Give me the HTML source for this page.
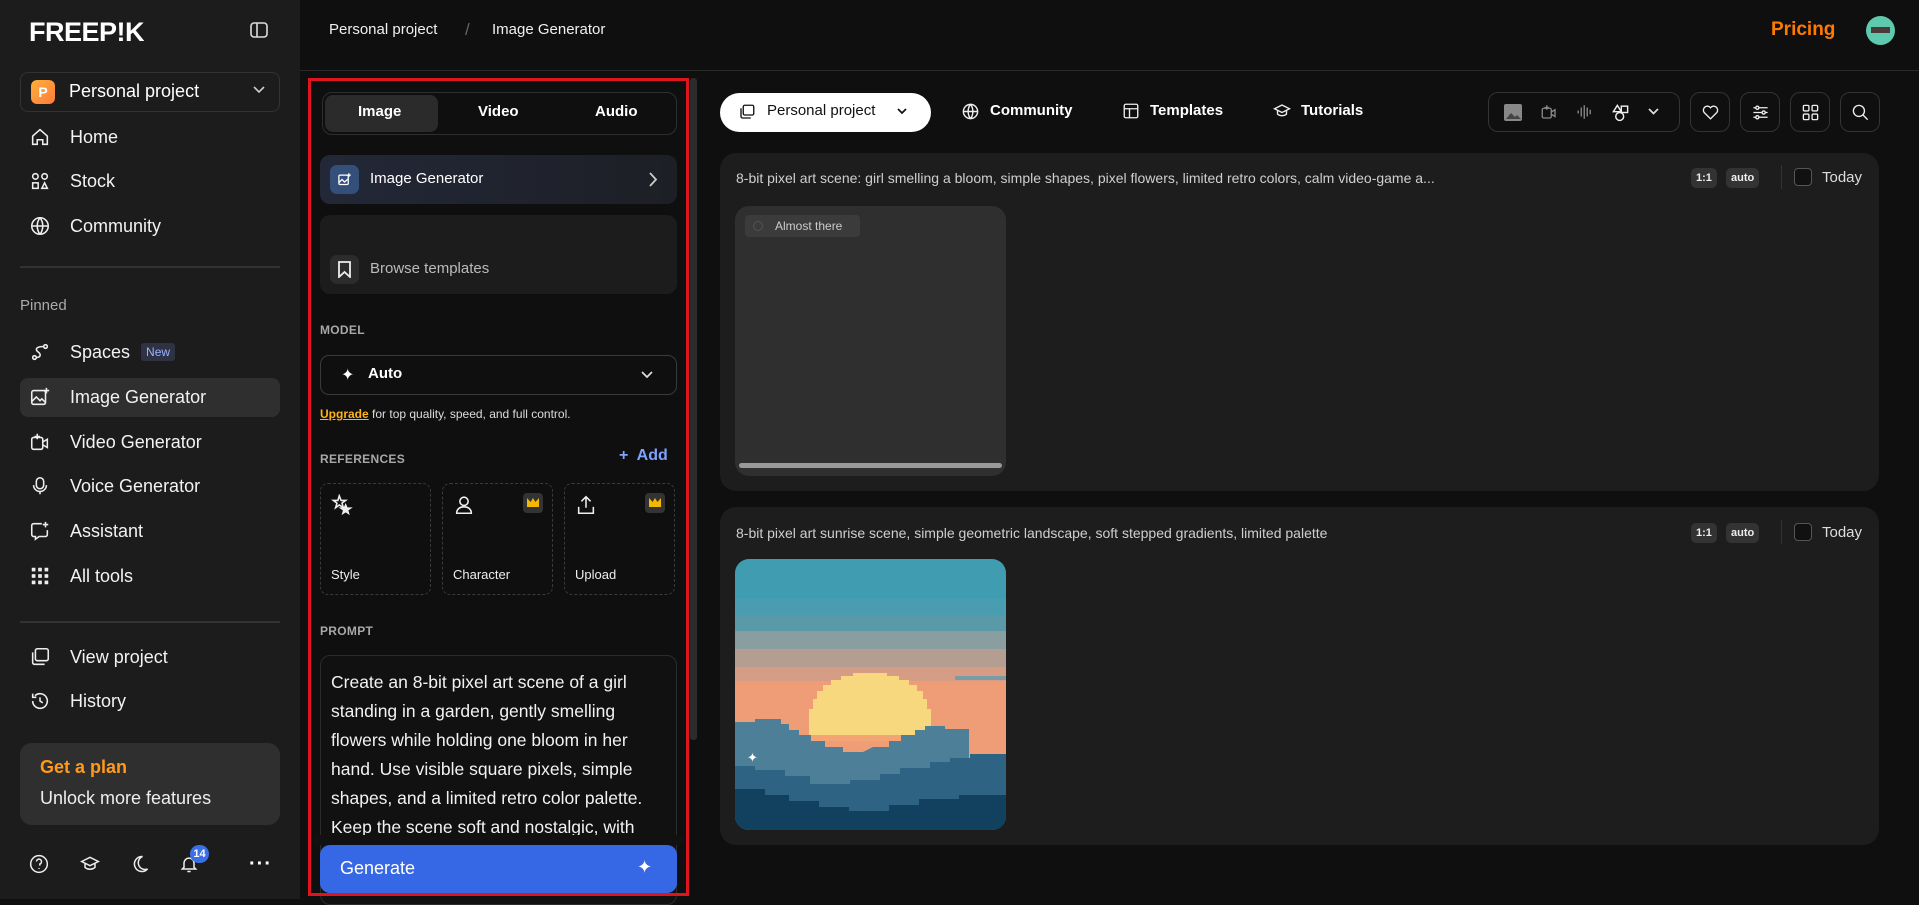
<!DOCTYPE html>
<html><head><meta charset="utf-8"><style>
*{box-sizing:border-box;margin:0;padding:0}
body{width:1919px;height:899px;background:#0f0f0f;font-family:"Liberation Sans",sans-serif;color:#fff;position:relative;overflow:hidden}
.a{position:absolute}
.sb{left:0;top:0;width:300px;height:899px;background:#1c1c1c}
.nav{left:29px;font-size:18px;color:#f2f2f2;display:flex;align-items:center;gap:19px;height:30px}
.nav svg{width:22px;height:22px;stroke:#eee;fill:none;stroke-width:1.7}
.lbl{font-size:12px;color:#a8a8a8;font-weight:bold;letter-spacing:.3px}
.ref{border:1.5px dashed #3a3a3a;border-radius:8px;width:111px;height:112px}
.ref span{position:absolute;left:10px;bottom:12px;font-size:13px;color:#eee}
.ref svg{position:absolute;left:10px;top:10px;width:22px;height:22px;stroke:#eee;fill:none;stroke-width:1.7}
.crown{position:absolute;right:9px;top:9px;width:20px;height:20px;background:#333;border-radius:4px}
.crown:after{content:"";position:absolute;left:4px;top:5px;width:12px;height:9px;background:#f5b800;clip-path:polygon(0 0,30% 45%,50% 0,70% 45%,100% 0,100% 100%,0 100%)}
.tb{width:40px;height:40px;border:1px solid #333;border-radius:10px;top:92px}
.tb svg{position:absolute;left:10px;top:10px;width:19px;height:19px;stroke:#eee;fill:none;stroke-width:1.7}
.card{left:720px;width:1159px;background:#1d1d1d;border-radius:16px}
.ct{left:16px;font-size:14px;color:#cfcfcf}
.bd{font-size:11px;font-weight:bold;background:#333;border-radius:5px;padding:4px 5px;color:#eee}
</style></head><body>
<div class="a sb"></div>
<div class="a" style="left:29px;top:17px;font-size:27px;font-weight:900;letter-spacing:-.5px">FREEP!K</div>
<svg class="a" style="left:250px;top:22px" width="18" height="16" viewBox="0 0 18 16" fill="none" stroke="#ddd" stroke-width="1.6"><rect x="1" y="1" width="16" height="14" rx="3"/><path d="M7 1v14"/></svg>
<div class="a" style="left:20px;top:72px;width:260px;height:40px;border:1px solid #333;border-radius:8px"></div>
<div class="a" style="left:31px;top:80px;width:24px;height:24px;border-radius:6px;background:linear-gradient(135deg,#ffb03a,#ff7a3a);font-size:14px;font-weight:bold;text-align:center;line-height:24px">P</div>
<div class="a" style="left:69px;top:81px;font-size:18px">Personal project</div>
<svg class="a" style="left:253px;top:86px" width="12" height="8" fill="none" stroke="#ccc" stroke-width="1.6"><path d="M1 1l5 5 5-5"/></svg>

<div class="a nav" style="top:122px"><svg viewBox="0 0 24 24"><path d="M4 11l8-7 8 7v9h-5v-5h-6v5H4z"/></svg>Home</div>
<div class="a nav" style="top:166px"><svg viewBox="0 0 24 24"><circle cx="7" cy="7" r="3"/><circle cx="17" cy="7" r="3"/><rect x="4" y="14" width="6" height="6"/><path d="M17 14l3 6h-6z"/></svg>Stock</div>
<div class="a nav" style="top:211px"><svg viewBox="0 0 24 24"><circle cx="12" cy="12" r="9"/><path d="M3 12h18M12 3c-4 5-4 13 0 18M12 3c4 5 4 13 0 18"/></svg>Community</div>
<div class="a" style="left:20px;top:266px;width:260px;height:2px;background:#333"></div>
<div class="a" style="left:20px;top:297px;font-size:15px;color:#aaa">Pinned</div>
<div class="a nav" style="top:337px"><svg viewBox="0 0 24 24"><circle cx="6" cy="18" r="2"/><circle cx="18" cy="6" r="2"/><path d="M16 6c-8 0-10 3-6 6s2 6-2 6"/></svg>Spaces<span style="font-size:12px;background:#2e3242;color:#9cb4ff;padding:2px 5px;border-radius:3px;margin-left:-8px">New</span></div>
<div class="a" style="left:20px;top:378px;width:260px;height:39px;background:#2f2f2f;border-radius:8px"></div>
<div class="a nav" style="top:382px"><svg viewBox="0 0 24 24"><rect x="3" y="5" width="15" height="15" rx="2"/><path d="M3 17l5-5 4 4 2-2 4 4M19 2v6M16 5h6"/></svg>Image Generator</div>
<div class="a nav" style="top:427px"><svg viewBox="0 0 24 24"><rect x="3" y="7" width="12" height="13" rx="2"/><path d="M15 12l5-3v9l-5-3M9 3v6M6 6h6"/></svg>Video Generator</div>
<div class="a nav" style="top:471px"><svg viewBox="0 0 24 24"><rect x="8" y="3" width="8" height="12" rx="4"/><path d="M5 11a7 7 0 0 0 14 0M12 18v3"/></svg>Voice Generator</div>
<div class="a nav" style="top:516px"><svg viewBox="0 0 24 24"><path d="M14 4H5a2 2 0 0 0-2 2v10a2 2 0 0 0 2 2h2v3l4-3h7a2 2 0 0 0 2-2v-5M18 2v6M15 5h6"/></svg>Assistant</div>
<div class="a nav" style="top:561px"><svg viewBox="0 0 24 24" style="fill:#eee;stroke:none"><rect x="3" y="3" width="4" height="4"/><rect x="10" y="3" width="4" height="4"/><rect x="17" y="3" width="4" height="4"/><rect x="3" y="10" width="4" height="4"/><rect x="10" y="10" width="4" height="4"/><rect x="17" y="10" width="4" height="4"/><rect x="3" y="17" width="4" height="4"/><rect x="10" y="17" width="4" height="4"/><rect x="17" y="17" width="4" height="4"/></svg>All tools</div>
<div class="a" style="left:20px;top:621px;width:260px;height:2px;background:#333"></div>
<div class="a nav" style="top:642px"><svg viewBox="0 0 24 24"><rect x="7" y="3" width="14" height="13" rx="2"/><path d="M4 7v11a2 2 0 0 0 2 2h11"/></svg>View project</div>
<div class="a nav" style="top:686px"><svg viewBox="0 0 24 24"><path d="M4 12a8 8 0 1 0 2.5-5.8M4 4v4h4M12 8v4l3 2"/></svg>History</div>
<div class="a" style="left:20px;top:743px;width:260px;height:82px;background:#2f2f2f;border-radius:12px"></div>
<div class="a" style="left:40px;top:757px;font-size:18px;color:#ff9a1a;font-weight:bold">Get a plan</div>
<div class="a" style="left:40px;top:788px;font-size:18px;color:#eee">Unlock more features</div>
<svg class="a" style="left:29px;top:854px" width="20" height="20" viewBox="0 0 24 24" fill="none" stroke="#eee" stroke-width="1.8"><circle cx="12" cy="12" r="10"/><path d="M9 9a3 3 0 1 1 4 3v2M12 17v1"/></svg>
<svg class="a" style="left:80px;top:854px" width="20" height="20" viewBox="0 0 24 24" fill="none" stroke="#eee" stroke-width="1.8"><path d="M2 9l10-5 10 5-10 5zM6 11v5c3 3 9 3 12 0v-5"/></svg>
<svg class="a" style="left:130px;top:854px" width="20" height="20" viewBox="0 0 24 24" fill="none" stroke="#eee" stroke-width="1.8"><path d="M15 3a9 9 0 1 0 6 15A8 8 0 0 1 15 3z"/></svg>
<svg class="a" style="left:179px;top:854px" width="20" height="20" viewBox="0 0 24 24" fill="none" stroke="#eee" stroke-width="1.8"><path d="M6 16V11a6 6 0 0 1 12 0v5l2 2H4zM10 21h4"/></svg>
<div class="a" style="left:190px;top:845px;width:19px;height:18px;border-radius:9px;background:#3b6fe6;font-size:11px;font-weight:bold;text-align:center;line-height:18px">14</div>
<div class="a" style="left:249px;top:853px;font-size:20px;letter-spacing:1px;font-weight:bold">···</div>

<div class="a" style="left:329px;top:21px;font-size:15px;color:#f0f0f0">Personal project</div>
<div class="a" style="left:465px;top:20px;font-size:17px;color:#666">/</div>
<div class="a" style="left:492px;top:21px;font-size:15px;color:#f0f0f0">Image Generator</div>
<div class="a" style="left:1771px;top:19px;font-size:19px;color:#ff7a00;font-weight:bold">Pricing</div>
<div class="a" style="left:1866px;top:16px;width:29px;height:29px;border-radius:50%;background:#5ec9ad;overflow:hidden"><div style="position:absolute;left:5px;top:11px;width:19px;height:6px;background:#4a3a3a"></div></div>
<div class="a" style="left:300px;top:70px;width:1619px;height:1px;background:#2a2a2a"></div>

<!-- panel -->
<div class="a" style="left:690px;top:78px;width:7px;height:662px;background:#2c2c2c;border-radius:3px"></div>
<div class="a" style="left:322px;top:92px;width:355px;height:43px;border:1px solid #2e2e2e;border-radius:10px"></div>
<div class="a" style="left:325px;top:95px;width:113px;height:37px;background:#2b2b2b;border-radius:8px"></div>
<div class="a" style="left:358px;top:103px;font-size:15px;font-weight:bold">Image</div>
<div class="a" style="left:478px;top:103px;font-size:15px;font-weight:bold">Video</div>
<div class="a" style="left:595px;top:103px;font-size:15px;font-weight:bold">Audio</div>
<div class="a" style="left:320px;top:155px;width:357px;height:49px;border-radius:10px;background:linear-gradient(90deg,#232838,#1d1f25)"></div>
<div class="a" style="left:330px;top:165px;width:29px;height:29px;border-radius:7px;background:#34507a"></div>
<svg class="a" style="left:337px;top:172px" width="15" height="15" viewBox="0 0 24 24" fill="none" stroke="#fff" stroke-width="2"><rect x="3" y="5" width="15" height="15" rx="2"/><path d="M3 17l5-5 4 4 6-5M19 2v6M16 5h6"/></svg>
<div class="a" style="left:370px;top:170px;font-size:15px">Image Generator</div>
<svg class="a" style="left:648px;top:172px" width="10" height="15" fill="none" stroke="#ccc" stroke-width="1.8"><path d="M2 1l6 6.5L2 14"/></svg>
<div class="a" style="left:320px;top:215px;width:357px;height:79px;border-radius:10px;background:#1c1c1c"></div>
<div class="a" style="left:330px;top:255px;width:29px;height:29px;border-radius:7px;background:#2c2c2c"></div>
<svg class="a" style="left:337px;top:261px" width="15" height="17" viewBox="0 0 15 17" fill="none" stroke="#eee" stroke-width="1.8"><path d="M2 1h11v15l-5.5-5L2 16z"/></svg>
<div class="a" style="left:370px;top:260px;font-size:15px;color:#bbb">Browse templates</div>
<div class="a lbl" style="left:320px;top:323px">MODEL</div>
<div class="a" style="left:320px;top:355px;width:357px;height:40px;border:1px solid #3a3a3a;border-radius:9px"></div>
<div class="a" style="left:341px;top:365px;font-size:16px">✦</div>
<div class="a" style="left:368px;top:365px;font-size:15px;font-weight:bold">Auto</div>
<svg class="a" style="left:641px;top:371px" width="12" height="8" fill="none" stroke="#ddd" stroke-width="1.7"><path d="M1 1l5 5 5-5"/></svg>
<div class="a" style="left:320px;top:407px;font-size:12px;color:#ddd"><u style="color:#ffb21a;font-weight:bold">Upgrade</u> for top quality, speed, and full control.</div>
<div class="a lbl" style="left:320px;top:452px">REFERENCES</div>
<div class="a" style="left:619px;top:447px;font-size:16px;color:#7ea2ff;font-weight:bold">+&nbsp; Add</div>
<div class="a ref" style="left:320px;top:483px"><svg viewBox="0 0 24 24"><path d="M9 2l2 5h5l-4 3 1.5 5L9 12l-4 3 1.5-5-4-3h5z"/><path d="M16 12l1.5 3.5H21l-3 2 1 3.5-3-2-3 2 1-3.5-3-2h3.5z" fill="#eee"/></svg><span>Style</span></div>
<div class="a ref" style="left:442px;top:483px"><svg viewBox="0 0 24 24"><circle cx="12" cy="8" r="4.5"/><path d="M4 21c0-5 4-7 8-7s8 2 8 7z"/></svg><div class="crown"></div><span>Character</span></div>
<div class="a ref" style="left:564px;top:483px"><svg viewBox="0 0 24 24"><path d="M12 15V3M7 8l5-5 5 5M4 14v7h16v-7"/></svg><div class="crown"></div><span>Upload</span></div>
<div class="a lbl" style="left:320px;top:624px">PROMPT</div>
<div class="a" style="left:320px;top:655px;width:357px;height:250px;border:1px solid #2c2c2c;border-radius:10px;background:#111"></div>
<div class="a" style="left:331px;top:668px;width:340px;font-size:17.5px;line-height:29px;color:#f2f2f2">Create an 8-bit pixel art scene of a girl standing in a garden, gently smelling flowers while holding one bloom in her hand. Use visible square pixels, simple shapes, and a limited retro color palette. Keep the scene soft and nostalgic, with</div>
<div class="a" style="left:314px;top:835px;width:370px;height:10px;background:#111"></div>
<div class="a" style="left:320px;top:845px;width:357px;height:48px;background:#3668e6;border-radius:10px"></div>
<div class="a" style="left:340px;top:858px;font-size:18px">Generate</div>
<div class="a" style="left:637px;top:857px;font-size:18px">✦</div>
<div class="a" style="left:308px;top:78px;width:381px;height:818px;border:3px solid #e0141e"></div>

<!-- toolbar -->
<div class="a" style="left:720px;top:93px;width:211px;height:39px;background:#fff;border-radius:20px"></div>
<svg class="a" style="left:738px;top:103px" width="18" height="18" viewBox="0 0 24 24" fill="none" stroke="#111" stroke-width="1.8"><rect x="7" y="3" width="14" height="13" rx="2"/><path d="M4 7v11a2 2 0 0 0 2 2h11"/></svg>
<div class="a" style="left:767px;top:102px;font-size:15px;color:#111">Personal project</div>
<svg class="a" style="left:897px;top:108px" width="10" height="7" fill="none" stroke="#111" stroke-width="1.7"><path d="M1 1l4 4 4-4"/></svg>
<svg class="a" style="left:961px;top:102px" width="19" height="19" viewBox="0 0 24 24" fill="none" stroke="#eee" stroke-width="1.8"><circle cx="12" cy="12" r="9"/><path d="M3 12h18M12 3c-4 5-4 13 0 18M12 3c4 5 4 13 0 18"/></svg>
<div class="a" style="left:990px;top:102px;font-size:15px;font-weight:bold">Community</div>
<svg class="a" style="left:1122px;top:102px" width="18" height="18" viewBox="0 0 24 24" fill="none" stroke="#eee" stroke-width="1.8"><rect x="3" y="3" width="18" height="18" rx="2"/><path d="M3 9h18M10 9v12"/></svg>
<div class="a" style="left:1150px;top:102px;font-size:15px;font-weight:bold">Templates</div>
<svg class="a" style="left:1273px;top:102px" width="18" height="18" viewBox="0 0 24 24" fill="none" stroke="#eee" stroke-width="1.8"><path d="M2 9l10-5 10 5-10 5zM6 11v5c3 3 9 3 12 0v-5"/></svg>
<div class="a" style="left:1301px;top:102px;font-size:15px;font-weight:bold">Tutorials</div>
<div class="a" style="left:1488px;top:92px;width:192px;height:40px;border:1px solid #333;border-radius:10px"></div>
<svg class="a" style="left:1504px;top:104px" width="18" height="17" viewBox="0 0 18 17" fill="#888"><rect x="0" y="0" width="18" height="17" rx="2"/><path d="M2 15l5-6 4 4 2-2 4 4z" fill="#444"/></svg>
<svg class="a" style="left:1540px;top:103px" width="18" height="18" viewBox="0 0 24 24" fill="none" stroke="#888" stroke-width="1.8"><rect x="3" y="7" width="12" height="13" rx="2"/><path d="M15 12l5-3v9l-5-3M9 3v6M6 6h6"/></svg>
<svg class="a" style="left:1576px;top:103px" width="18" height="18" viewBox="0 0 24 24" fill="none" stroke="#888" stroke-width="1.8"><path d="M3 10v4M7 6v12M11 3v18M15 6v12M19 9v6"/></svg>
<svg class="a" style="left:1611px;top:103px" width="19" height="19" viewBox="0 0 24 24" fill="none" stroke="#eee" stroke-width="1.8"><path d="M8 3l5 8H3z"/><rect x="13" y="4" width="8" height="8"/><circle cx="11" cy="17" r="5"/></svg>
<svg class="a" style="left:1648px;top:108px" width="11" height="7" fill="none" stroke="#ddd" stroke-width="1.7"><path d="M1 1l4.5 4.5L10 1"/></svg>
<div class="a tb" style="left:1690px"><svg viewBox="0 0 24 24"><path d="M12 20l-8-8a5 5 0 0 1 8-6 5 5 0 0 1 8 6z"/></svg></div>
<div class="a tb" style="left:1740px"><svg viewBox="0 0 24 24"><path d="M3 6h18M3 12h18M3 18h18"/><circle cx="8" cy="6" r="2" fill="#111"/><circle cx="16" cy="12" r="2" fill="#111"/><circle cx="8" cy="18" r="2" fill="#111"/></svg></div>
<div class="a tb" style="left:1790px"><svg viewBox="0 0 24 24"><rect x="3" y="3" width="7" height="7" rx="1.5"/><rect x="14" y="3" width="7" height="7" rx="1.5"/><rect x="3" y="14" width="7" height="7" rx="1.5"/><rect x="14" y="14" width="7" height="7" rx="1.5"/></svg></div>
<div class="a tb" style="left:1840px"><svg viewBox="0 0 24 24"><circle cx="10" cy="10" r="7"/><path d="M15 15l6 6"/></svg></div>

<!-- card 1 -->
<div class="a card" style="top:153px;height:338px">
 <div class="a ct" style="top:17px">8-bit pixel art scene: girl smelling a bloom, simple shapes, pixel flowers, limited retro colors, calm video-game a...</div>
 <div class="a bd" style="left:971px;top:15px">1:1</div><div class="a bd" style="left:1006px;top:15px">auto</div>
 <div class="a" style="left:1061px;top:12px;width:1px;height:24px;background:#333"></div>
 <div class="a" style="left:1074px;top:15px;width:18px;height:18px;border:1.5px solid #555;border-radius:4px;background:#111"></div>
 <div class="a" style="left:1102px;top:16px;font-size:15px;color:#ddd">Today</div>
 <div class="a" style="left:15px;top:53px;width:271px;height:270px;background:#2f2f2f;border-radius:14px"></div>
 <div class="a" style="left:25px;top:62px;width:115px;height:22px;background:#3b3b3b;border-radius:4px;font-size:12px;color:#ccc;line-height:22px;padding-left:30px">Almost there</div>
 <div class="a" style="left:33px;top:68px;width:10px;height:10px;border:1.5px solid #555;border-radius:50%"></div>
 <div class="a" style="left:19px;top:310px;width:263px;height:5px;background:#999;border-radius:3px"></div>
</div>
<!-- card 2 -->
<div class="a card" style="top:507px;height:338px">
 <div class="a ct" style="top:18px">8-bit pixel art sunrise scene, simple geometric landscape, soft stepped gradients, limited palette</div>
 <div class="a bd" style="left:971px;top:16px">1:1</div><div class="a bd" style="left:1006px;top:16px">auto</div>
 <div class="a" style="left:1061px;top:13px;width:1px;height:24px;background:#333"></div>
 <div class="a" style="left:1074px;top:16px;width:18px;height:18px;border:1.5px solid #555;border-radius:4px;background:#111"></div>
 <div class="a" style="left:1102px;top:17px;font-size:15px;color:#ddd">Today</div>
 <svg class="a" style="left:15px;top:52px;border-radius:14px" width="271" height="271" viewBox="0 0 271 271">
  <rect width="271" height="271" fill="#3f9cb1"/>
  <rect y="40" width="271" height="16" fill="#4a9db0"/>
  <rect y="56" width="271" height="16" fill="#5a9aa8"/>
  <rect y="72" width="271" height="18" fill="#8a9e9f"/>
  <rect y="90" width="271" height="18" fill="#b49e92"/>
  <rect y="108" width="271" height="14" fill="#d59c86"/>
  <rect y="122" width="271" height="90" fill="#ef9d76"/>
  <rect x="220" y="117" width="51" height="4" fill="#7a9aa6"/>
  <path d="M74 182V150h4v-10h4v-8h6v-6h8v-5h10v-4h12v-3h34v3h12v4h10v5h8v6h6v8h4v10h4v32z" fill="#f8d87e"/>
  <rect x="70" y="176" width="130" height="6" fill="#f2a573"/>
  <path d="M0 170v-7h20v-3h26v5h8v6h10v5h12v6h14v6h18v5h20l10-5h16v-6h12v-6h14v-5h10v-4h20v3h24v-1V271H0z" fill="#4e7f98"/>
  <path d="M0 207h20v4h30v6h25v8h40v-4h30v-6h20v-6h30v-6h20v-4h20v-4h36V271H0z" fill="#2e6384"/>
  <path d="M0 230h30v6h24v6h30v6h30v4h40v-6h30v-6h40v-4h47V271H0z" fill="#12405f"/>
 </svg>
 <div class="a" style="left:27px;top:243px;font-size:13px;color:#fff">✦</div>
</div>
</body></html>
